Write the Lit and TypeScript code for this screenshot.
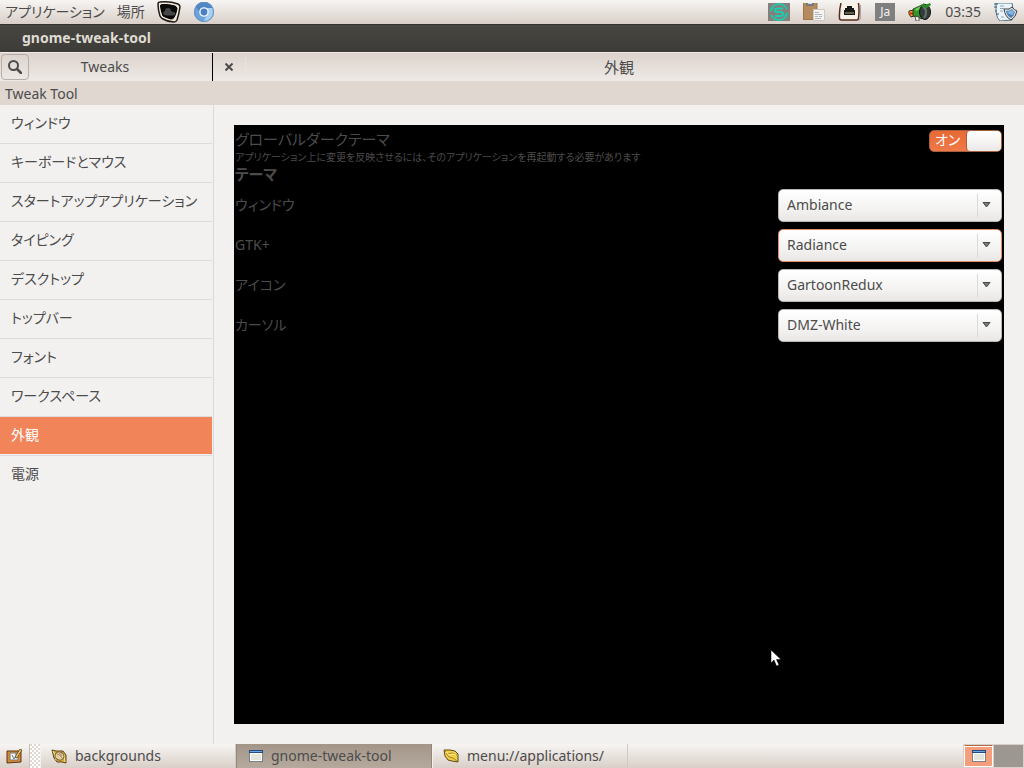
import { LitElement, html, css } from "lit";
import { customElement, property, state } from "lit/decorators.js";

const windowIcon = html`<svg width="14" height="12" viewBox="0 0 14 12" aria-hidden="true">
  <rect x=".5" y=".5" width="13" height="11" fill="#e4e5df" stroke="#7c8084" />
  <path d="M1.500 3.500h11v7h-11z" fill="none" stroke="#fff" />
  <path d="M0 0h14v3H0z" fill="#204a87" /><path d="M1 1h12v1H1z" fill="#72a4dc" />
</svg>`;

const shellIcon = html`<svg width="16" height="15" viewBox="0 0 16 15" aria-hidden="true">
  <path d="M1 1l4 1 7 0 3 4 0 8-4-1-5 0-3-4z" fill="#d9b03a" stroke="#5c451c" />
  <path d="M2 2l2 4 1 5M13 6l1 7" stroke="#f4e08c" fill="none" />
  <ellipse cx="8.500" cy="7" rx="4.500" ry="4" fill="#e5cfa2" stroke="#75603c" transform="rotate(30 8.500 7)" />
  <path d="M6 5q3 0 5 4M8 4q2 1 3 3" stroke="#a48a5d" fill="none" />
</svg>`;

const folderIcon = html`<svg width="16" height="14" viewBox="0 0 16 14" aria-hidden="true">
  <path d="M1 1l6 0 5 1 3 3v8l-6-1-4-1-3-4z" fill="#f2cf45" stroke="#5e4b1b" />
  <path d="M2 2l3 3 4-1 5 2M3 4l3 4 4 1 4 3" fill="none" stroke="#a8852a" />
  <path d="M3 3l3 3 4-1 3 1" fill="none" stroke="#ffec9a" />
</svg>`;

const launcherIcon = html`<svg width="24" height="22" viewBox="0 0 24 22" aria-hidden="true">
  <path d="M3 1Q13 0 21 3q2 1 2 3-1 7-3 13-1 2-3 2-6 0-11-3-2-1-3-3Q1 9 1 3q0-2 2-2z" fill="#f3e9da" stroke="#211a16" stroke-width="1.5" />
  <path d="M5 3.500q7-.5 13 1.500 2 1 2 2.500-1 6-3 9-1 1.500-3 1.500-4-1-8-3Q4 10 3.500 5q0-1.500 1.500-1.500z" fill="#0b0b0b" stroke="#000" />
  <path d="M7 14q-2-3 1-4 0-3 3-3 3 0 3 3l2 1q3 0 2 3-6 1-11 0z" fill="#474747" />
</svg>`;

const chromiumIcon = html`<svg width="22" height="22" viewBox="0 0 22 22" aria-hidden="true">
  <circle cx="11" cy="11" r="10" fill="#6ea3d8" />
  <path d="M2.500 5.500A10 10 0 0 1 20 7H11a4.500 4.500 0 0 0-4.300 4z" fill="#4f86c4" />
  <path d="M20 7A10 10 0 0 1 10 21l5-8a4.500 4.500 0 0 0-4-6z" fill="#a9d0ef" />
  <circle cx="11" cy="11" r="9.500" fill="none" stroke="#5b8fc4" />
  <circle cx="11" cy="11" r="4.800" fill="#f2f7fb" /><circle cx="11" cy="11" r="3.400" fill="#4a80c2" />
</svg>`;

const syncIcon = html`<svg width="22" height="18" viewBox="0 0 22 18" aria-hidden="true">
  <path d="M0 0h22v18H0z" fill="#85807c" />
  <g fill="none" stroke="#16d0b0" stroke-width="1.5">
    <path d="M3 6Q6 1 11 1t8 5M3 12q3 5 8 5t8-5" />
    <path d="M2 8q2-1 3-3M20 10q-2 1-3 3" />
    <path d="M15 5.500H9.500Q7 5.500 7 7.300T9.500 9h3Q15 9 15 11t-2.500 2H7" stroke-width="2" />
  </g>
</svg>`;

const clipboardIcon = html`<svg width="22" height="18" viewBox="0 0 22 18" aria-hidden="true">
  <path d="M0 0h14v17H0z" fill="#b58a5c" /><path d="M.5 0v16.500H14V0" fill="none" stroke="#9e7749" />
  <path d="M3 0h8v3H3z" fill="#777b7b" /><path d="M5 0h4v1H5z" fill="#d7d9d7" />
  <path d="M10.500 6.500h11v11h-11z" fill="#f4f4f2" stroke="#cacac6" />
  <path d="M12 9.500h4M12 11.500h7M12 13.500h3M16 13.500h3M12 15.500h6" stroke="#b5b5b5" />
</svg>`;

const networkIcon = html`<svg width="24" height="18" viewBox="0 0 24 18" aria-hidden="true">
  <path d="M3 0Q1 8 1.500 15q0 2 2 2h15q2 0 2-2 1-7 0-15" fill="#f7f1e7" stroke="#5a2a20" stroke-width="1.500" />
  <path d="M22.500 2v13q0 2-2 2.500" stroke="#aaa49d" fill="none" />
  <path d="M9 3h5v2h2v2h1v5H6V7h1V5h2z" fill="#181818" /><path d="M7 9h9v2H7z" fill="#656044" />
</svg>`;

const soundIcon = html`<svg width="24" height="18" viewBox="0 0 24 18" aria-hidden="true">
  <path d="M1 8l5-1v6l-3 1-2-3z" fill="#f4a23a" stroke="#40280c" />
  <path d="M2 10.500h3" stroke="#d22" stroke-width="2" />
  <path d="M5 6l9-4v14l-5-2-4-1z" fill="#33962c" stroke="#12200c" stroke-width=".7" />
  <path d="M7 6l6-3v3L8 8z" fill="#6ad14e" />
  <path d="M7 13l4 1v4H8z" fill="#eee" stroke="#222" stroke-width=".7" />
  <ellipse cx="17" cy="9" rx="5.500" ry="7.500" fill="#343c3a" stroke="#0f1410" />
  <path d="M15 4q3 1 3 5t-2 6" stroke="#66706d" stroke-width="2" fill="none" />
  <path d="M13 2l3-2 1 2 5-2 1 2-4 3-5-1z" fill="#2b8a28" />
</svg>`;

const sessionIcon = html`<svg width="24" height="18" viewBox="0 0 24 18" aria-hidden="true">
  <path d="M2 0l16 0 1 6-1 11-12 1q-3-2-4-9z" fill="#edf3f7" stroke="#50768e" />
  <path d="M6 3h4M6 5.500h4M6 8h3M7 14h3" stroke="#88a7ba" />
  <path d="M0 1h4M0 4h3M1 8h2M2 11h3" stroke="#355f7c" />
  <path d="M10 6q6 1 8-2 2 3 5 4-1 6-6 9-6-3-7-11z" fill="#e2e0da" stroke="#39434c" />
  <path d="M12 8q4 0 6-2 1 2 3 3-1 4-4 6-4-2-5-7z" fill="#447eb8" /><path d="M13 9q2 3 6 3l1-3-2-2z" fill="#84b5df" />
</svg>`;

const desktopIcon = html`<svg width="17" height="15" viewBox="0 0 17 15" aria-hidden="true">
  <path d="M1 2h14v11l-14 1z" fill="#d9892f" stroke="#5b3215" />
  <path d="M4 4h8v7H4z" fill="#f4f5f4" stroke="#777" />
  <path d="M6 6l2 4 5-7M10 4v5" stroke="#557b9c" fill="none" />
  <path d="M9 8l5-8 2 1-5 8z" fill="#f2c55b" stroke="#4a3015" stroke-width=".7" />
</svg>`;

const searchIcon = html`<svg width="14" height="14" viewBox="0 0 14 14" aria-hidden="true">
  <circle cx="5.500" cy="5.500" r="4.500" fill="none" stroke="#4c4c4c" stroke-width="2" />
  <path d="M9 9l4 4" stroke="#4c4c4c" stroke-width="2.500" stroke-linecap="round" />
</svg>`;

const closeIcon = html`<svg width="8" height="8" viewBox="0 0 8 8" aria-hidden="true">
  <path d="M.5.500l7 7M7.500.500l-7 7" stroke="#4c4c4c" stroke-width="2" />
</svg>`;

const base = css`
  * { box-sizing: border-box; }
  svg { display: block; flex: none; }
  button, select, input { font: inherit; color: inherit; margin: 0; }
  button { border: 0; background: none; padding: 0; }
`;

@customElement("top-panel")
export class TopPanel extends LitElement {
  static styles = [base, css`
    :host {
      display: flex; align-items: center; justify-content: space-between;
      height: 24px; flex: none; padding: 0 6px 0 5px;
      background: linear-gradient(#f7f5f3, #d9cfc8);
    }
    .side { display: flex; align-items: center; gap: 12px; }
    .status { display: flex; align-items: center; gap: 13px; }
    .lang { width: 20px; height: 18px; background: #7f7f7f; color: #f2f2f2; font-size: 12px; line-height: 18px; text-align: center; }
  `];

  render() {
    return html`
      <nav class="side">
        <button>アプリケーション</button>
        <button>場所</button>
        <button aria-label="ランチャー">${launcherIcon}</button>
        <button aria-label="Chromium">${chromiumIcon}</button>
      </nav>
      <div class="status">
        ${syncIcon}${clipboardIcon}${networkIcon}
        <button class="lang">Ja</button>
        ${soundIcon}
        <time>03:35</time>
        ${sessionIcon}
      </div>`;
  }
}

@customElement("theme-row")
export class ThemeRow extends LitElement {
  @property() label = "";
  @property() value = "";
  @property({ type: Boolean }) active = false;

  static styles = [base, css`
    .row { display: flex; align-items: center; justify-content: space-between; height: 40px; }
    .field { position: relative; width: 224px; height: 33px; }
    select {
      appearance: none; width: 100%; height: 100%; padding: 0 32px 0 8px;
      border: 1px solid #b9b5b1; border-radius: 5px; outline: 0;
      background: linear-gradient(#ffffff, #f4f3f2 60%, #e9e7e5); color: #4c4c4c;
    }
    .active select { border-color: #e48a64; }
    .arrow { position: absolute; right: 11px; top: 5px; display: flex; align-items: center; height: 23px; padding-left: 4px; border-left: 1px solid #dcdad8; pointer-events: none; }
  `];

  render() {
    return html`<div class="row">
      <label for="choice">${this.label}</label>
      <div class="field ${this.active ? "active" : ""}">
        <select id="choice"><option>${this.value}</option></select>
        <span class="arrow"><svg width="9" height="6" viewBox="0 0 9 6"><path d="M1 .5h7l-3.500 4.500z" fill="#7a7a7a" stroke="#4c4c4c" /></svg></span>
      </div>
    </div>`;
  }
}

@customElement("task-bar")
export class TaskBar extends LitElement {
  static styles = [base, css`
    :host { display: flex; height: 24px; flex: none; background: linear-gradient(#f7f5f3, #d9cfc8); }
    .desktop { width: 30px; border-right: 1px solid #c9c0b9; padding-left: 6px; }
    .grip { width: 10px; background: repeating-conic-gradient(#ffffff 0 25%, #dfd9d4 0 50%) 0 0 / 4px 4px; }
    .task { display: flex; align-items: center; gap: 8px; width: 196px; padding-left: 10px; border-left: 1px solid #f4f1ef; border-right: 1px solid #d3cac3; white-space: nowrap; }
    .task.current { padding-left: 12px; background: linear-gradient(#a39689, #b5a99d); border-color: #94887c; }
    .pager { display: flex; gap: 1px; margin-left: auto; padding: 1px; background: #d9cfc8; }
    .space { display: grid; place-items: center; width: 29px; height: 22px; background: #9c9791; }
    .space.on { background: #f59e7b; border: 1px solid #fff; box-shadow: inset 0 1px #fff; border-top-color: #b06a42; }
  `];

  render() {
    return html`
      <button class="desktop" aria-label="デスクトップの表示">${desktopIcon}</button>
      <span class="grip"></span>
      <button class="task">${shellIcon}<span>backgrounds</span></button>
      <button class="task current">${windowIcon}<span>gnome-tweak-tool</span></button>
      <button class="task">${folderIcon}<span>menu://applications/</span></button>
      <div class="pager">
        <button class="space on" aria-label="ワークスペース 1">${windowIcon}</button>
        <button class="space" aria-label="ワークスペース 2"></button>
      </div>`;
  }
}

@customElement("app-root")
export class AppRoot extends LitElement {
  @state() private selected = "外観";

  private sections = ["ウィンドウ", "キーボードとマウス", "スタートアップアプリケーション", "タイピング",
    "デスクトップ", "トップバー", "フォント", "ワークスペース", "外観", "電源"];

  private themes = [
    { label: "ウィンドウ", value: "Ambiance" },
    { label: "GTK+", value: "Radiance", active: true },
    { label: "アイコン", value: "GartoonRedux" },
    { label: "カーソル", value: "DMZ-White" },
  ];

  static styles = [base, css`
    :host {
      position: relative; display: flex; flex-direction: column; min-height: 100vh; overflow: hidden;
      background: #f2f1f0; color: #4c4c4c;
      font: 14px/20px "Noto Sans", "Noto Sans CJK JP", sans-serif;
      font-feature-settings: "palt";
    }
    .title { height: 28px; margin: 0; padding-left: 22px; font-size: 14px; line-height: 26px; font-weight: 700; color: #dfdbd2; background: linear-gradient(#474641, #3c3b37); border-top: 1px solid #33322f; }
    .header { display: flex; height: 29px; background: linear-gradient(#dcd2cb, #eeeae7); border-top: 1px solid #efeae6; }
    .left { display: flex; align-items: center; width: 213px; padding: 0 1px; border-right: 1px solid #000; }
    .search { display: grid; place-items: center; width: 28px; height: 26px; border: 1px solid #b9aea5; border-radius: 4px; }
    .heading { flex: 1; margin: 0; font-size: 14px; line-height: 20px; font-weight: 400; text-align: center; }
    .left .heading { padding-right: 30px; }
    .right { display: flex; align-items: center; flex: 1; }
    .close { display: grid; place-items: center; width: 32px; height: 28px; }
    .right .heading { padding-right: 32px; border-left: 1px solid #e8e3df; font-size: 15px; }
    .info { height: 24px; margin: 0; padding-left: 5px; line-height: 25px; background: #dfd7d0; }
    .body { display: flex; flex: 1; }
    .list { width: 214px; flex: none; margin: 0; padding: 0 1px 0 0; list-style: none; border-right: 1px solid #dcdad8; }
    .list li { height: 39px; border-bottom: 1px solid #dcdbd9; }
    .list li:last-child { border-bottom: 0; }
    .item { display: block; width: 100%; height: 37px; padding: 0 0 2px 11px; text-align: left; white-space: nowrap; }
    .item.on { background: #f18458; color: #fff; }
    .page { flex: 1; margin: 20px; padding: 4px 2px 0 1px; background: #000; }
    .switch-row { display: flex; justify-content: space-between; align-items: flex-start; }
    .switch-row label { display: block; font-size: 15px; line-height: 21px; }
    .note { margin: 0; font-size: 10px; line-height: 14px; }
    .group { margin: 0; font-size: 15px; line-height: 21px; font-weight: 700; }
    .switch { position: relative; width: 73px; height: 22px; margin-top: 1px; }
    .switch input { appearance: none; display: block; width: 100%; height: 100%; border: 1px solid #a5603f; border-radius: 5px; background: linear-gradient(#e86a35, #ef7948); }
    .switch input::after { content: ""; display: block; width: 34px; height: 20px; margin-left: auto; border-radius: 4px; border-left: 1px solid #a5603f; background: linear-gradient(#ffffff, #ebe9e7); }
    .switch span { position: absolute; left: 6px; top: 0; line-height: 20px; color: #fff; pointer-events: none; }
    .pointer { position: absolute; left: 770px; top: 649px; pointer-events: none; }
  `];

  render() {
    return html`
      <top-panel></top-panel>
      <h1 class="title">gnome-tweak-tool</h1>
      <header class="header">
        <div class="left">
          <button class="search" aria-label="検索">${searchIcon}</button>
          <h2 class="heading">Tweaks</h2>
        </div>
        <div class="right">
          <button class="close" aria-label="閉じる">${closeIcon}</button>
          <h2 class="heading">${this.selected}</h2>
        </div>
      </header>
      <p class="info">Tweak Tool</p>
      <div class="body">
        <ul class="list">
          ${this.sections.map((name) => html`<li>
            <button class="item ${name === this.selected ? "on" : ""}" @click=${() => (this.selected = name)}>${name}</button>
          </li>`)}
        </ul>
        <main class="page">
          <div class="switch-row">
            <div>
              <label for="dark">グローバルダークテーマ</label>
              <p class="note">アプリケーション上に変更を反映させるには、そのアプリケーションを再起動する必要があります</p>
            </div>
            <div class="switch"><input id="dark" type="checkbox" role="switch" checked /><span>オン</span></div>
          </div>
          <h3 class="group">テーマ</h3>
          ${this.themes.map((t) => html`<theme-row .label=${t.label} .value=${t.value} .active=${!!t.active}></theme-row>`)}
        </main>
      </div>
      <task-bar></task-bar>
      <svg class="pointer" width="12" height="18" viewBox="0 0 12 18" aria-hidden="true">
        <path d="M1 1v13l3-3 2.500 6 2.500-1-2.500-5.500H11z" fill="#fff" stroke="#000" stroke-width=".5" />
      </svg>`;
  }
}
